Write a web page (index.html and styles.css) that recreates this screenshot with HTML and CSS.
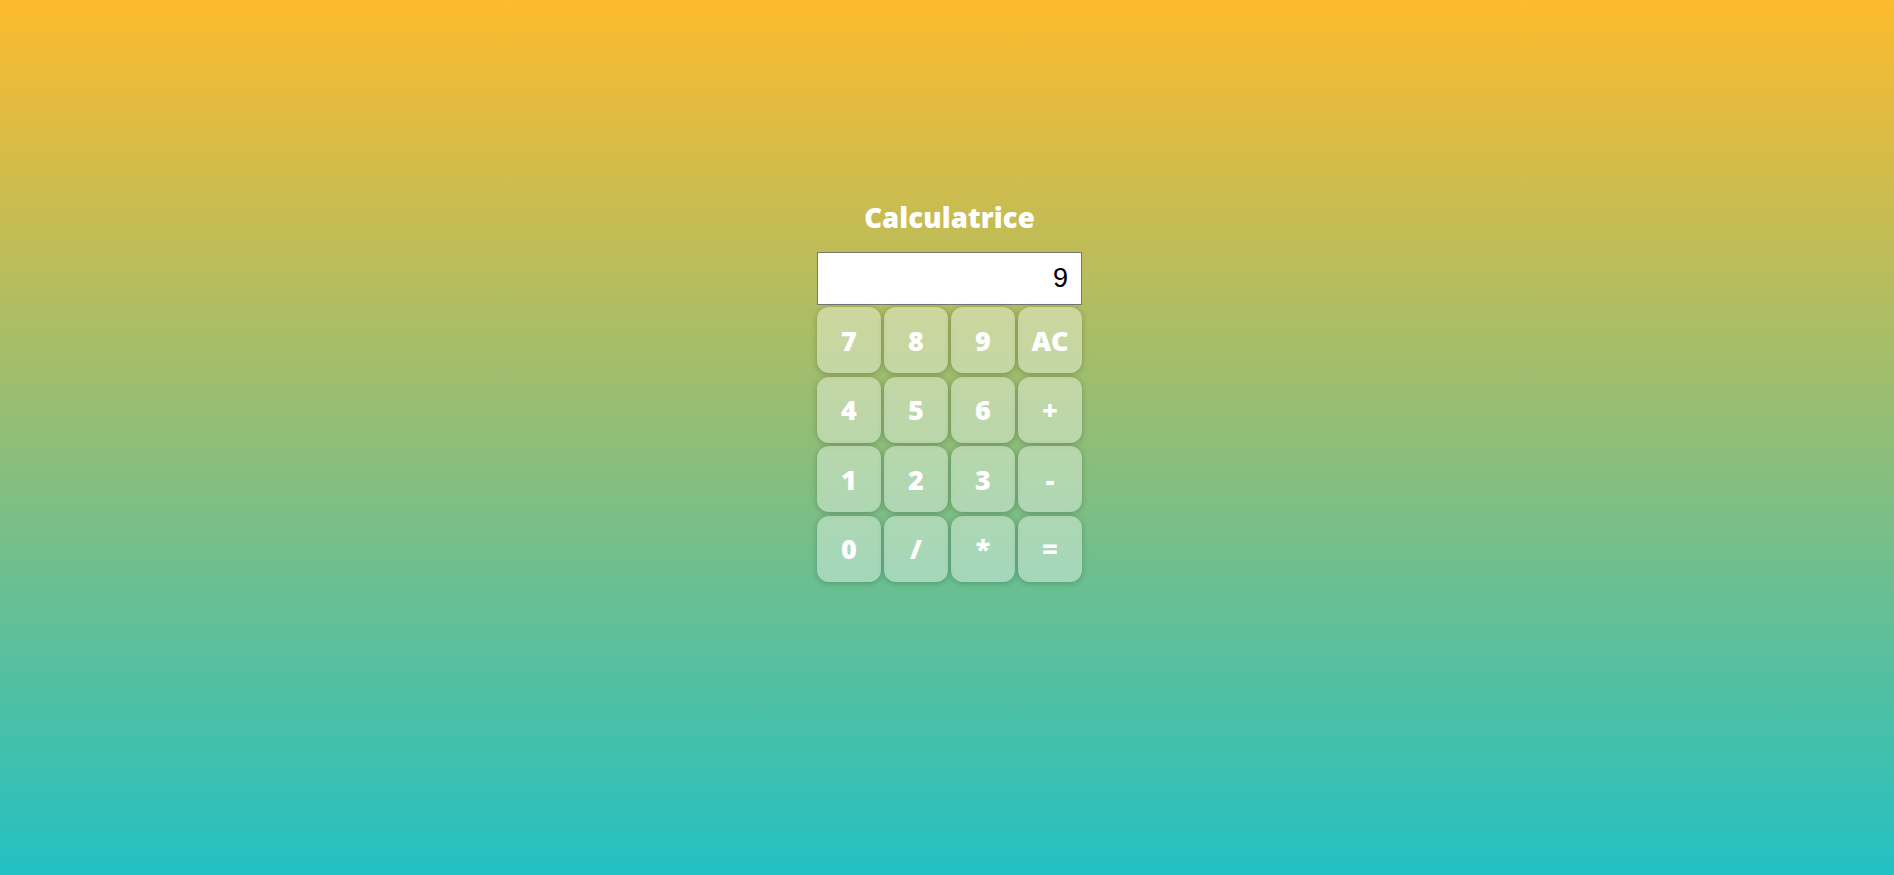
FILE: index.html
```html
<!DOCTYPE html>
<html lang="fr">
<head>
<meta charset="utf-8">
<title>Calculatrice</title>
<link rel="stylesheet" href="styles.css">
</head>
<body>
<main class="page">
  <div class="calc">
    <h1 class="title">Calculatrice</h1>
    <input class="display" type="text" value="9" readonly>
    <div class="keys">
      <button class="key">7</button>
      <button class="key">8</button>
      <button class="key">9</button>
      <button class="key">AC</button>
      <button class="key">4</button>
      <button class="key">5</button>
      <button class="key">6</button>
      <button class="key">+</button>
      <button class="key">1</button>
      <button class="key">2</button>
      <button class="key">3</button>
      <button class="key key-minus">-</button>
      <button class="key">0</button>
      <button class="key">/</button>
      <button class="key">*</button>
      <button class="key">=</button>
    </div>
  </div>
</main>
</body>
</html>
```
FILE: styles.css
```css
html, body {
  margin: 0;
  padding: 0;
  height: 100%;
}
body {
  background: linear-gradient(0deg, #22c1c3 0%, #fdbb2d 100%);
  font-family: "Open Sans", "Liberation Sans", sans-serif;
}
.page {
  display: flex;
  justify-content: center;
  padding-top: 200px;
  padding-left: 5px;
}
.calc {
  display: flex;
  flex-direction: column;
  align-items: center;
  width: 265px;
}
.title {
  margin: 0 0 16px 0;
  color: #fff;
  font-family: "Open Sans", sans-serif;
  font-weight: 800;
  font-size: 27.5px;
  line-height: 36px;
  letter-spacing: 0.1px;
}
.display {
  box-sizing: border-box;
  width: 265px;
  height: 53px;
  margin: 0 0 2px 0;
  padding: 0 13px;
  border: 1px solid #767676;
  background: #fff;
  font-family: "Liberation Sans", Arial, sans-serif;
  font-size: 27px;
  color: #000;
  text-align: right;
  outline: none;
}
.keys {
  display: grid;
  grid-template-columns: repeat(4, 64px);
  grid-auto-rows: 66px;
  column-gap: 3px;
  row-gap: 3.5px;
}
.key {
  border: none;
  border-radius: 12px;
  background: rgba(255, 255, 255, 0.38);
  box-shadow: 0 1px 6px rgba(0, 0, 0, 0.22);
  color: #fff;
  font-family: "Open Sans", sans-serif;
  font-weight: 800;
  font-size: 27px;
  padding: 0;
  cursor: pointer;
}
.key-minus {
  transform-origin: center;
}
```
